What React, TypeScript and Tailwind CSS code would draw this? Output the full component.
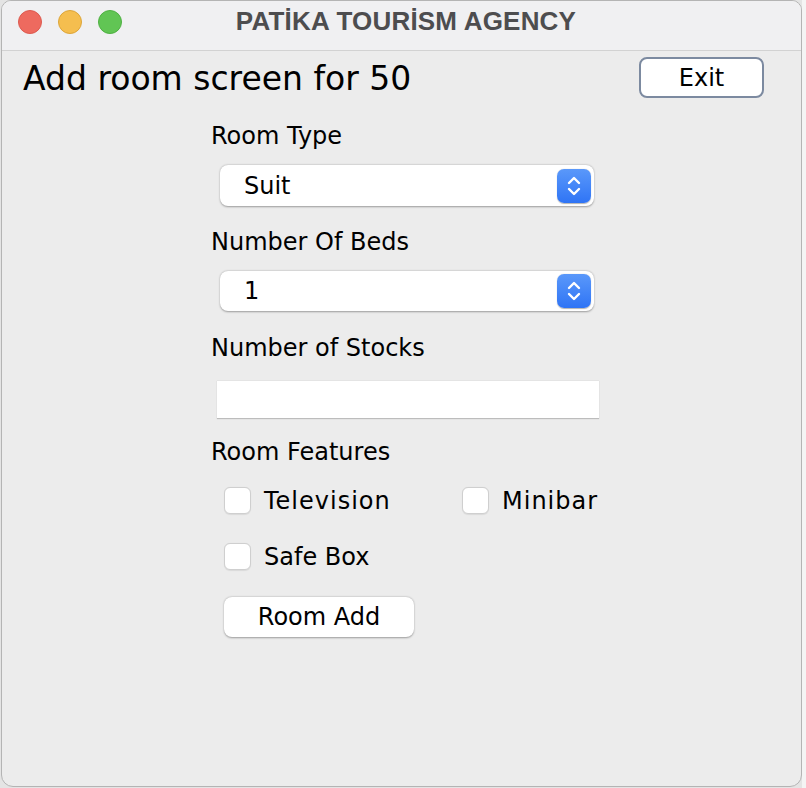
import React from "react";

const Stepper = () => (
  <div className="flex h-[34px] w-[34px] items-center justify-center rounded-[7px] bg-gradient-to-b from-[#5a98fa] to-[#2f74f5] shadow-[0_0.5px_1px_rgba(0,0,0,0.3)]">
    <svg width="16" height="24" viewBox="0 0 16 24" fill="none" stroke="white" strokeWidth="2.4" strokeLinecap="round" strokeLinejoin="round">
      <path d="M3 9 L8 4 L13 9" />
      <path d="M3 15 L8 20 L13 15" />
    </svg>
  </div>
);

const Combo = ({ value, h }: { value: string; h: string }) => (
  <div className={`ml-[9px] flex w-[374px] items-center justify-between rounded-[8px] bg-white pl-[24px] pr-[3px] shadow-[0_0.5px_2px_rgba(0,0,0,0.35)] ${h}`}>
    <span className="leading-none">{value}</span>
    <Stepper />
  </div>
);

const Check = ({ label, wide }: { label: string; wide?: boolean }) => (
  <div className="flex h-[27px] items-center gap-[13px]">
    <div className="h-[27px] w-[27px] shrink-0 rounded-[6px] border border-[#cfcfcf] bg-white shadow-[0_0.5px_1px_rgba(0,0,0,0.08)]" />
    <span className={wide ? "leading-none tracking-[1px]" : "leading-none"}>{label}</span>
  </div>
);

export default function App() {
  return (
    <div className="relative h-[788px] w-[806px] overflow-hidden bg-[#e4e4e4]" style={{ fontFamily: '"DejaVu Sans", sans-serif' }}>
      <div className="absolute right-0 top-0 h-[788px] w-[4px] bg-[#f4f4f4]" />
      <div className="absolute left-[1px] top-0 flex h-[787px] w-[801px] flex-col overflow-hidden rounded-t-[10px] rounded-b-[12px] border border-[#b4b4b4] bg-[#ececec]">
        <div className="relative flex h-[50px] shrink-0 items-center justify-center border-b border-[#d2d2d2] bg-[#f0f0f2]">
          <div className="absolute left-[16px] top-[9px] flex gap-[16px]">
            <div className="h-[24px] w-[24px] rounded-full border border-[#dc5a50] bg-[#ee6a5f]" />
            <div className="h-[24px] w-[24px] rounded-full border border-[#dca53a] bg-[#f5be4f]" />
            <div className="h-[24px] w-[24px] rounded-full border border-[#4fb043] bg-[#61c554]" />
          </div>
          <span className="-mt-[9px] ml-[9px] text-[26px] font-bold tracking-[0.2px] text-[#4d4d4f]" style={{ fontFamily: '"Liberation Sans", sans-serif' }}>
            PATİKA TOURİSM AGENCY
          </span>
        </div>
        <div className="flex flex-col text-[24px] leading-[30px] text-black">
          <div className="flex items-start justify-between pl-[21px] pr-[37px] pt-[6px]">
            <span className="mt-[6px] text-[33px] leading-[32px]">Add room screen for 50</span>
            <div className="flex h-[41px] w-[125px] items-center justify-center rounded-[8px] border-2 border-[#7c8aa0] bg-white leading-none">
              Exit
            </div>
          </div>
          <div className="ml-[209px] flex w-[400px] flex-col">
            <div className="mt-[23px] h-[30px]">Room Type</div>
            <div className="mt-[14px]"><Combo value="Suit" h="h-[41px]" /></div>
            <div className="mt-[21px] h-[30px]">Number Of Beds</div>
            <div className="mt-[14px]"><Combo value="1" h="h-[40px]" /></div>
            <div className="mt-[22px] h-[30px]">Number of Stocks</div>
            <div className="ml-[6px] mt-[17px] h-[38px] w-[382px] border-t border-[#e4e4e4] bg-white shadow-[0_1px_1px_rgba(0,0,0,0.2)]" />
            <div className="mt-[19px] h-[30px]">Room Features</div>
            <div className="ml-[13px] mt-[20px] flex">
              <div className="w-[238px]"><Check label="Television" wide /></div>
              <Check label="Minibar" wide />
            </div>
            <div className="ml-[13px] mt-[29px]"><Check label="Safe Box" /></div>
            <div className="ml-[13px] mt-[27px] flex h-[40px] w-[190px] items-center justify-center rounded-[8px] bg-white leading-none shadow-[0_0.5px_2px_rgba(0,0,0,0.35)]">
              Room Add
            </div>
          </div>
        </div>
      </div>
    </div>
  );
}
